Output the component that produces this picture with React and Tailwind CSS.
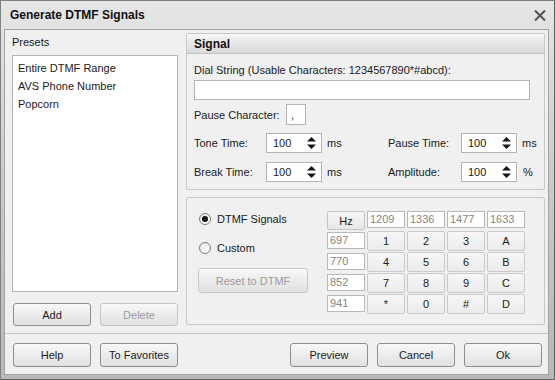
import React from "react";

const presets = ["Entire DTMF Range", "AVS Phone Number", "Popcorn"];
const colFreqs = ["1209", "1336", "1477", "1633"];
const rows = [
  ["697", "1", "2", "3", "A"],
  ["770", "4", "5", "6", "B"],
  ["852", "7", "8", "9", "C"],
  ["941", "*", "0", "#", "D"],
];

function Btn({ children, disabled, className = "" }) {
  return (
    <div
      className={`flex items-center justify-center border rounded-[3px] bg-linear-to-b from-[#f8f8f8] to-[#e1e1e1] ${
        disabled ? "border-[#c6c6c6] text-[#9b9b9b]" : "border-[#8e8e8e] text-[#1c1c1c]"
      } ${className}`}
    >
      {children}
    </div>
  );
}

function Spin({ value }) {
  return (
    <div className="w-[56px] h-[20px] bg-white border border-[#b4b4b4] flex items-center justify-between pl-[6px] pr-[5px]">
      <span>{value}</span>
      <svg width="9" height="14" viewBox="0 0 9 14">
        <path d="M4.5 1 L9 5.5 L0 5.5 Z" fill="#151515" />
        <path d="M0 8.5 L9 8.5 L4.5 13 Z" fill="#151515" />
      </svg>
    </div>
  );
}

function Radio({ checked, label }) {
  return (
    <div className="flex items-center h-[16px]">
      <div className="w-[12px] h-[12px] rounded-full border border-[#7d7d7d] bg-linear-to-br from-[#e4e4e4] to-white flex items-center justify-center">
        {checked && <div className="w-[6px] h-[6px] rounded-full bg-[#111]" />}
      </div>
      <span className="ml-[6px]">{label}</span>
    </div>
  );
}

function FreqBox({ value }) {
  return (
    <div className="h-[17px] bg-white border border-[#b9b9b9] text-[#858585] pl-[2px] leading-[15px]">
      {value}
    </div>
  );
}

function Key({ children }) {
  return (
    <div className="h-[20px] flex items-center justify-center border border-[#cbcbcb] rounded-[2px] bg-linear-to-b from-[#f7f7f7] to-[#ebebeb] text-[#222]">
      {children}
    </div>
  );
}

export default function App() {
  return (
    <div className="w-[555px] h-[380px] bg-linear-to-b from-[#e6e6e6] via-[#c9c9c9] to-[#b8b8b8] border border-[#808080] border-r-[#5f5f5f] border-b-[#5f5f5f] flex flex-col font-['Liberation_Sans',Arial,sans-serif] text-[11px] text-[#1a1a1a] leading-[14px] overflow-hidden">
      {/* title bar */}
      <div className="h-[28px] flex items-center justify-between pl-[9px] pr-[8px] shrink-0">
        <span className="font-bold text-[12px] text-[#111]">Generate DTMF Signals</span>
        <svg width="12" height="11" viewBox="0 0 12 11">
          <path d="M1 0.5 L11 10.5 M11 0.5 L1 10.5" stroke="#505050" strokeWidth="2" />
        </svg>
      </div>

      {/* body */}
      <div className="ml-[3px] w-[545px] h-[346px] bg-[#f0f0f0] border border-[#a3a3a3] flex flex-col">
        <div className="h-[303px] flex pt-[3px] pl-[7px] pr-[3px] gap-[8px]">
          {/* presets */}
          <div className="w-[166px] flex flex-col">
            <div className="h-[22px] pt-[2px]">Presets</div>
            <div className="h-[237px] bg-white border border-[#b4b4b4] pt-[3px] pl-[5px]">
              {presets.map((p) => (
                <div key={p} className="h-[18px] flex items-center">
                  {p}
                </div>
              ))}
            </div>
            <div className="flex gap-[9px] mt-[11px] pl-[1px]">
              <Btn className="w-[78px] h-[23px]">Add</Btn>
              <Btn disabled className="w-[78px] h-[23px]">Delete</Btn>
            </div>
          </div>

          {/* right column */}
          <div className="w-[359px] flex flex-col gap-[7px]">
            <div className="h-[157px] border border-[#c8c8c8] rounded-[2px] flex flex-col">
              <div className="h-[20px] bg-linear-to-b from-[#f6f6f6] to-[#d9d9d9] border-b border-[#c4c4c4] flex items-center pl-[7px] font-bold text-[12px] text-[#111]">
                Signal
              </div>
              <div className="pl-[7px] flex flex-col">
                <div className="mt-[9px]">Dial String (Usable Characters: 1234567890*#abcd):</div>
                <div className="mt-[3px] w-[336px] h-[20px] bg-white border border-[#b4b4b4]" />
                <div className="mt-[4px] flex items-center">
                  <span className="w-[92px]">Pause Character:</span>
                  <div className="w-[20px] h-[21px] bg-white border border-[#b4b4b4] pl-[4px] flex items-center">,</div>
                </div>
                <div className="mt-[8px] flex items-center">
                  <span className="w-[72px]">Tone Time:</span>
                  <Spin value="100" />
                  <span className="w-[66px] pl-[5px]">ms</span>
                  <span className="w-[73px]">Pause Time:</span>
                  <Spin value="100" />
                  <span className="pl-[5px]">ms</span>
                </div>
                <div className="mt-[9px] flex items-center">
                  <span className="w-[72px]">Break Time:</span>
                  <Spin value="100" />
                  <span className="w-[66px] pl-[5px]">ms</span>
                  <span className="w-[73px]">Amplitude:</span>
                  <Spin value="100" />
                  <span className="pl-[6px]">%</span>
                </div>
              </div>
            </div>

            <div className="h-[128px] border border-[#c8c8c8] rounded-[2px] flex">
              <div className="w-[140px] pl-[12px] pt-[13px] flex flex-col">
                <Radio checked label="DTMF Signals" />
                <div className="mt-[13px]">
                  <Radio label="Custom" />
                </div>
                <Btn disabled className="mt-[12px] -ml-[1px] w-[110px] h-[25px]">Reset to DTMF</Btn>
              </div>
              <div className="pt-[13px]">
                <div className="grid grid-cols-[38px_38px_38px_38px_38px] grid-rows-[19px_20px_20px_20px_20px] gap-x-[2px] gap-y-[1px]">
                  <div className="border border-[#c4c4c4] rounded-[2px] bg-linear-to-b from-[#f6f6f6] to-[#e8e8e8] flex items-center justify-center">
                    Hz
                  </div>
                  {colFreqs.map((f) => (
                    <FreqBox key={f} value={f} />
                  ))}
                  {rows.map((r) => (
                    <React.Fragment key={r[0]}>
                      <div className="pt-[1px]">
                        <FreqBox value={r[0]} />
                      </div>
                      {r.slice(1).map((k) => (
                        <Key key={k}>{k}</Key>
                      ))}
                    </React.Fragment>
                  ))}
                </div>
              </div>
            </div>
          </div>
        </div>

        {/* bottom bar */}
        <div className="flex-1 border-t border-[#c6c6c6] flex items-start pt-[9px] pl-[8px] pr-[6px]">
          <Btn className="w-[78px] h-[24px]">Help</Btn>
          <Btn className="ml-[9px] w-[78px] h-[24px]">To Favorites</Btn>
          <div className="flex-1" />
          <Btn className="w-[78px] h-[24px]">Preview</Btn>
          <Btn className="ml-[9px] w-[78px] h-[24px]">Cancel</Btn>
          <Btn className="ml-[9px] w-[78px] h-[24px]">Ok</Btn>
        </div>
      </div>
    </div>
  );
}
